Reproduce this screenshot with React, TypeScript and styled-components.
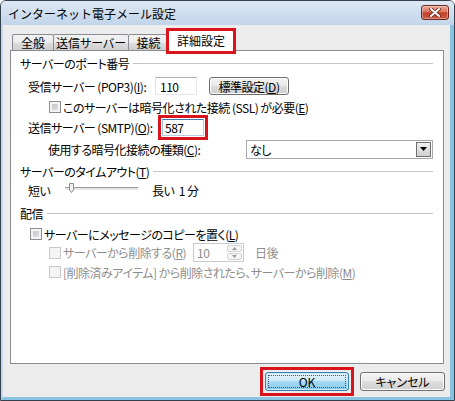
import styled, { createGlobalStyle } from 'styled-components';

const GlobalStyle = createGlobalStyle`
  html, body {
    margin: 0;
    padding: 0;
    background: #ffffff;
  }
  body {
    font-family: "Noto Sans CJK JP", "Noto Sans", sans-serif;
    font-size: 12px;
    font-feature-settings: "palt";
    color: #000;
  }
  u {
    text-underline-offset: 1px;
  }
`;

const Window = styled.div`
  width: 455px;
  height: 401px;
  box-sizing: border-box;
  border: 1px solid #34404c;
  border-radius: 6px 6px 0 0;
  display: flex;
  flex-direction: column;
  overflow: hidden;
`;

const TitleBar = styled.div`
  height: 24px;
  flex: none;
  display: flex;
  align-items: center;
  justify-content: space-between;
  padding: 0 5px 0 7px;
  background: linear-gradient(#dde8f4, #c2d5ea);
  font-feature-settings: normal;
`;

const CloseBtn = styled.div`
  align-self: flex-start;
  margin-top: 4px;
  width: 28px;
  height: 15px;
  box-sizing: border-box;
  border: 1px solid #6b2a1f;
  border-radius: 3px;
  background: linear-gradient(#e9a897 0%, #d9755f 45%, #c3402a 52%, #cb5a43 100%);
  box-shadow: inset 0 0 0 1px rgba(255, 255, 255, 0.35);
  display: flex;
  align-items: center;
  justify-content: center;
`;

const Client = styled.div`
  flex: 1;
  display: flex;
  flex-direction: column;
  background: #ececec;
  border-style: solid;
  border-color: #c8d8ea #88c4e2 #88c4e2 #c8d8ea;
  border-width: 0 4px 3px 2px;
  padding: 5px 5px 0 7px;
`;

// red annotation frame drawn over a control
const markFrame = (inset: number) => `
  &::before {
    content: '';
    position: absolute;
    inset: -${inset}px;
    border: 3px solid #d9141c;
    pointer-events: none;
  }
`;

const TabRow = styled.div`
  height: 21px;
  display: flex;
  align-items: flex-end;
  padding-left: 2px;
  position: relative;
  z-index: 1;
`;

const Tab = styled.div<{ $w: number; $active?: boolean }>`
  width: ${(p) => p.$w}px;
  height: ${(p) => (p.$active ? 21 : 17)}px;
  box-sizing: border-box;
  position: relative;
  margin-left: -1px;
  border: 1px solid #898c95;
  border-bottom: ${(p) => (p.$active ? 'none' : '1px solid #898c95')};
  border-radius: 2px 2px 0 0;
  background: ${(p) =>
    p.$active ? '#ffffff' : 'linear-gradient(#f3f3f3, #ebebeb 50%, #dddddd 51%, #cfcfcf)'};
  display: flex;
  align-items: center;
  justify-content: center;
  padding-bottom: ${(p) => (p.$active ? 2 : 0)}px;
  &:first-child {
    margin-left: 0;
  }
  ${(p) => (p.$active ? markFrame(3) : '')}
`;

const Panel = styled.div`
  margin: -1px 1px 0 0;
  height: 314px;
  box-sizing: border-box;
  border: 1px solid #898c95;
  background: #ffffff;
  padding: 0 10px 0 9px;
  display: flex;
  flex-direction: column;
  letter-spacing: -0.5px;
`;

const Row = styled.div<{ $h: number; $indent?: number; $disabled?: boolean }>`
  height: ${(p) => p.$h}px;
  flex: none;
  display: flex;
  align-items: center;
  padding-left: ${(p) => p.$indent ?? 0}px;
  color: ${(p) => (p.$disabled ? '#8d8d8d' : '#000')};
  white-space: nowrap;
`;

const Rule = styled.div`
  flex: 1;
  height: 1px;
  margin-left: 4px;
  background: #c3c7cb;
`;

const Label = styled.span<{ $w: number }>`
  width: ${(p) => p.$w}px;
  flex: none;
`;

const TextField = styled.div<{ $w: number; $h: number; $focus?: boolean; $mark?: boolean }>`
  width: ${(p) => p.$w}px;
  height: ${(p) => p.$h}px;
  box-sizing: border-box;
  flex: none;
  position: relative;
  border: 1px solid;
  border-color: ${(p) =>
    p.$focus ? '#3d7bad #b5cfe7 #b5cfe7 #a4c9e3' : '#abadb3 #e3e9ef #e3e9ef #e2e3ea'};
  background: #fff;
  padding-left: ${(p) => (p.$focus ? 2 : 4)}px;
  display: flex;
  align-items: center;
  ${(p) => (p.$mark ? markFrame(5) : '')}
`;

const PushButton = styled.div<{ $w: number; $h: number; $default?: boolean; $mark?: boolean }>`
  width: ${(p) => p.$w}px;
  height: ${(p) => p.$h}px;
  box-sizing: border-box;
  flex: none;
  position: relative;
  border: 1px solid ${(p) => (p.$default ? '#3c7fb1' : '#707070')};
  border-radius: 3px;
  background: ${(p) =>
    p.$default
      ? 'linear-gradient(#e8f6fd 0%, #cdeaf9 45%, #a9daf3 50%, #84c8ec 100%)'
      : 'linear-gradient(#f2f2f2 0%, #ebebeb 45%, #dddddd 50%, #cfcfcf 100%)'};
  box-shadow: inset 0 0 0 1px ${(p) => (p.$default ? '#c6e8fa' : '#fcfcfc')};
  display: flex;
  align-items: center;
  justify-content: center;
  &::after {
    content: '';
    display: ${(p) => (p.$default ? 'block' : 'none')};
    position: absolute;
    inset: 2px;
    border: 1px dotted #3a5a74;
  }
  ${(p) => (p.$mark ? markFrame(6) : '')}
`;

const Check = styled.span<{ $disabled?: boolean }>`
  width: 12px;
  height: 12px;
  box-sizing: border-box;
  flex: none;
  margin-right: 2px;
  border: 1px solid ${(p) => (p.$disabled ? '#c8c8c8' : '#8f8f8f')};
  background: ${(p) => (p.$disabled ? '#f4f4f4' : 'linear-gradient(135deg, #b9bdc2, #eaeaeb)')};
  box-shadow: inset 0 0 0 2px #f4f4f4;
`;

const Select = styled.div`
  width: 187px;
  height: 19px;
  box-sizing: border-box;
  flex: none;
  border: 1px solid #a5a9ae;
  background: #fff;
  display: flex;
  align-items: center;
  justify-content: space-between;
  padding: 0 1px 0 3px;
`;

const DropBtn = styled.div`
  width: 15px;
  height: 15px;
  box-sizing: border-box;
  border: 1px solid #6f6f6f;
  background: linear-gradient(#f2f2f2, #e0e0e0 50%, #d0d0d0);
  display: flex;
  align-items: center;
  justify-content: center;
`;

const Track = styled.div`
  width: 73px;
  height: 3px;
  box-sizing: border-box;
  flex: none;
  margin: -3px 14px 0 0;
  border-top: 1px solid #9a9a9a;
  background: #e4e7ea;
  position: relative;
`;

const Thumb = styled.svg`
  position: absolute;
  left: 4px;
  top: -5px;
`;

const Spin = styled.div`
  width: 51px;
  height: 19px;
  box-sizing: border-box;
  flex: none;
  border: 1px solid #c7cbd0;
  background: #fff;
  display: flex;
  align-items: center;
  justify-content: space-between;
  padding: 1px 1px 1px 3px;
  margin-right: 11px;
`;

const SpinArrows = styled.div`
  width: 15px;
  height: 15px;
  display: flex;
  flex-direction: column;
  gap: 1px;
`;

const SpinHalf = styled.div`
  flex: 1;
  box-sizing: border-box;
  border: 1px solid #d2d4d6;
  border-radius: 2px;
  background: #f4f4f4;
  display: flex;
  align-items: center;
  justify-content: center;
`;

const Footer = styled.div`
  display: flex;
  justify-content: flex-end;
  gap: 11px;
  margin-top: 8px;
`;

function Arrow({ up, color }: { up?: boolean; color: string }) {
  return (
    <svg width="5" height="3" viewBox="0 0 5 3">
      <path d={up ? 'M2.5 0 L5 3 L0 3 Z' : 'M0 0 L5 0 L2.5 3 Z'} fill={color} />
    </svg>
  );
}

function Section({ title }: { title: React.ReactNode }) {
  return (
    <>
      <span>{title}</span>
      <Rule />
    </>
  );
}

export default function App() {
  return (
    <>
      <GlobalStyle />
      <Window>
        <TitleBar>
          <span>インターネット電子メール設定</span>
          <CloseBtn>
            <svg width="12" height="9" viewBox="0 0 12 9">
              <path d="M2 1 L10 8 M10 1 L2 8" stroke="#5a1c12" strokeWidth="3.4" strokeLinecap="round" />
              <path d="M2 1 L10 8 M10 1 L2 8" stroke="#ffffff" strokeWidth="2" strokeLinecap="round" />
            </svg>
          </CloseBtn>
        </TitleBar>
        <Client>
          <TabRow>
            <Tab $w={42}>全般</Tab>
            <Tab $w={76}>送信サーバー</Tab>
            <Tab $w={41}>接続</Tab>
            <Tab $w={66} $active>詳細設定</Tab>
          </TabRow>
          <Panel>
            <Row $h={24}>
              <Section title="サーバーのポート番号" />
            </Row>
            <Row $h={22} $indent={8}>
              <Label $w={127}>
                受信サーバー (POP3)(<u>I</u>):
              </Label>
              <TextField $w={42} $h={18}>110</TextField>
              <PushButton $w={80} $h={18} style={{ marginLeft: 12 }}>
                標準設定(<u>D</u>)
              </PushButton>
            </Row>
            <Row $h={20} $indent={29}>
              <Check />
              <span>
                このサーバーは暗号化された接続 (SSL) が必要(<u>E</u>)
              </span>
            </Row>
            <Row $h={20} $indent={8}>
              <Label $w={134}>
                送信サーバー (SMTP)(<u>O</u>):
              </Label>
              <TextField $w={42} $h={17} $focus $mark>
                587
              </TextField>
            </Row>
            <Row $h={24} $indent={28}>
              <Label $w={198}>
                使用する暗号化接続の種類(<u>C</u>):
              </Label>
              <Select>
                <span>なし</span>
                <DropBtn>
                  <svg width="7" height="4" viewBox="0 0 7 4">
                    <path d="M0 0 L7 0 L3.5 4 Z" fill="#000" />
                  </svg>
                </DropBtn>
              </Select>
            </Row>
            <Row $h={20}>
              <Section
                title={
                  <>
                    サーバーのタイムアウト(<u>T</u>)
                  </>
                }
              />
            </Row>
            <Row $h={18} $indent={8}>
              <Label $w={37}>短い</Label>
              <Track>
                <Thumb width="5" height="10" viewBox="0 0 5 10">
                  <path d="M0.5 0.5 H4.5 V7 L2.5 9.5 L0.5 7 Z" fill="#eef0f2" stroke="#8a8f94" />
                </Thumb>
              </Track>
              <span>長い&nbsp;&nbsp;1 分</span>
            </Row>
            <Row $h={28}>
              <Section title="配信" />
            </Row>
            <Row $h={14} $indent={10}>
              <Check />
              <span>
                サーバーにメッセージのコピーを置く(<u>L</u>)
              </span>
            </Row>
            <Row $h={23} $indent={29} $disabled>
              <Check $disabled />
              <Label $w={130}>
                サーバーから削除する(<u>R</u>)
              </Label>
              <Spin>
                <span>10</span>
                <SpinArrows>
                  <SpinHalf>
                    <Arrow up color="#9a9a9a" />
                  </SpinHalf>
                  <SpinHalf>
                    <Arrow color="#9a9a9a" />
                  </SpinHalf>
                </SpinArrows>
              </Spin>
              <span>日後</span>
            </Row>
            <Row $h={16} $indent={29} $disabled>
              <Check $disabled />
              <span>
                [削除済みアイテム] から削除されたら、サーバーから削除(<u>M</u>)
              </span>
            </Row>
          </Panel>
          <Footer>
            <PushButton $w={84} $h={19} $default $mark>
              OK
            </PushButton>
            <PushButton $w={85} $h={19}>
              キャンセル
            </PushButton>
          </Footer>
        </Client>
      </Window>
    </>
  );
}
